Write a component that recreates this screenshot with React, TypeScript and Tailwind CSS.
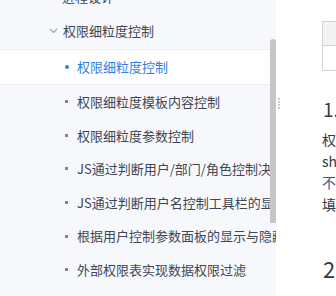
import React from 'react'

const items = [
  '权限细粒度模板内容控制',
  '权限细粒度参数控制',
  'JS通过判断用户/部门/角色控制决策报表',
  'JS通过判断用户名控制工具栏的显示',
  '根据用户控制参数面板的显示与隐藏',
  '外部权限表实现数据权限过滤',
]

const font = { fontFamily: '"Noto Sans CJK SC", "Noto Sans", sans-serif' }

export default function App() {
  return (
    <div className="flex w-[336px] h-[296px] overflow-hidden bg-white" style={font}>
      {/* 侧边目录 */}
      <aside className="relative w-[276px] shrink-0 bg-[#f7f8fb] overflow-hidden">
        <div className="-mt-[19px] text-[13px] text-[#3f4654]">
          <div className="h-[32px] flex items-center pl-[50px] whitespace-nowrap">
            <span className="w-[3px] h-[3px] bg-[#8a8f99] mr-[9px]" />
            进程设计
          </div>
          <div className="h-[36px] flex items-center pl-[49px] whitespace-nowrap">
            <svg width="9" height="6" viewBox="0 0 9 6" className="mr-[5px]">
              <path d="M1 1l3.5 3.5L8 1" fill="none" stroke="#9aa0aa" strokeWidth="1.1" />
            </svg>
            权限细粒度控制
          </div>
          <div className="h-[36px] flex items-center pl-[65px] bg-white border-y border-[#eceef2] text-[#2f7fe6] whitespace-nowrap">
            <span className="w-[4px] h-[4px] rounded-full bg-[#2f7fe6] mr-[8px]" />
            权限细粒度控制
          </div>
          {items.map((t) => (
            <div key={t} className="h-[33.6px] flex items-center pl-[65px] whitespace-nowrap">
              <span className="w-[3px] h-[3px] shrink-0 bg-[#80858f] mr-[9px]" />
              {t}
            </div>
          ))}
        </div>
        <div className="absolute left-[270px] top-[39px] w-[6px] h-[184px] rounded-t-[3px] bg-[#c6c6c6]" />
      </aside>

      {/* 正文 */}
      <main className="relative flex-1 text-[#333a45]">
        <div className="absolute left-[2px] top-[98px] grid grid-cols-1 gap-[1px]">
          {[0, 1, 2, 3].map((i) => (
            <span key={i} className="w-[2px] h-[2px] bg-[#c9ccd2]" />
          ))}
        </div>
        <div className="ml-[46px] mt-[21px] w-[40px] border border-[#d3d3d3]">
          <div className="h-[24px] bg-[#f3f3f3] border-b border-[#d3d3d3]" />
          <div className="h-[24px]" />
        </div>
        <div className="ml-[47px] mt-[26px] text-[19px] leading-[24px]">1.</div>
        <div className="ml-[46px] mt-[8px] text-[14px] leading-[21.5px] whitespace-nowrap">
          <div>权限</div>
          <div>sh</div>
          <div className="text-[#4a4f8f]">不同</div>
          <div>填写</div>
        </div>
        <div className="ml-[47px] mt-[40px] text-[22px] leading-[26px]">2.</div>
      </main>
    </div>
  )
}
